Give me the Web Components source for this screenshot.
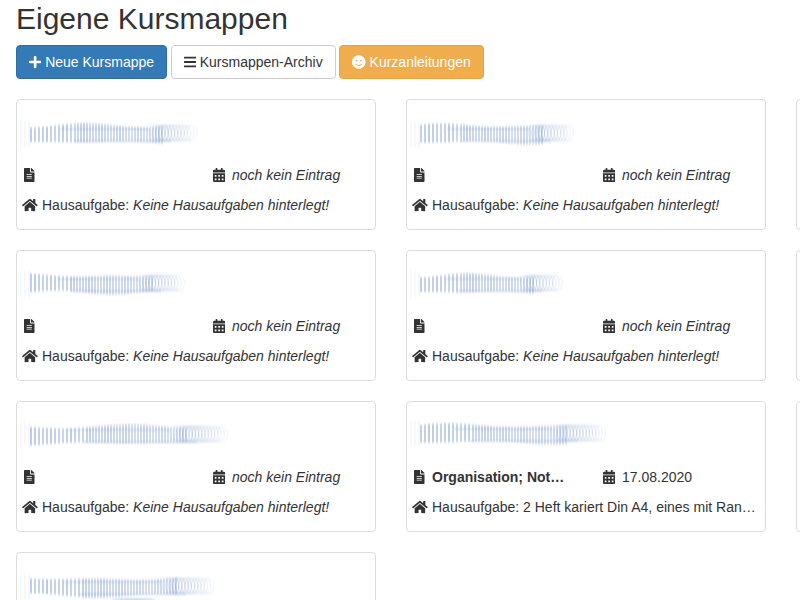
<!DOCTYPE html>
<html lang="de">
<head>
<meta charset="utf-8">
<title>Eigene Kursmappen</title>
<style>
  html, body {
    margin: 0;
    height: 600px;
    overflow: hidden;
    background: #fff;
    font: 14px/20px "Liberation Sans", Arial, sans-serif;
    color: #333;
  }
</style>
</head>
<body>
<kurs-page heading="Eigene Kursmappen">
  <kurs-button slot="actions" kind="primary" icon="plus">Neue Kursmappe</kurs-button>
  <kurs-button slot="actions" icon="bars">Kursmappen-Archiv</kurs-button>
  <kurs-button slot="actions" kind="warning" icon="smile">Kurzanleitungen</kurs-button>

  <kurs-card smear="167,1,2" date="noch kein Eintrag"><i>Keine Hausaufgaben hinterlegt!</i></kurs-card>
  <kurs-card smear="154,1,3" date="noch kein Eintrag"><i>Keine Hausaufgaben hinterlegt!</i></kurs-card>
  <kurs-card blank></kurs-card>

  <kurs-card smear="155,0,4" date="noch kein Eintrag"><i>Keine Hausaufgaben hinterlegt!</i></kurs-card>
  <kurs-card smear="144,0,2" date="noch kein Eintrag"><i>Keine Hausaufgaben hinterlegt!</i></kurs-card>
  <kurs-card blank></kurs-card>

  <kurs-card smear="197,0,1" date="noch kein Eintrag"><i>Keine Hausaufgaben hinterlegt!</i></kurs-card>
  <kurs-card smear="186,-1,3" topic="Organisation; Notizen" date="17.08.2020" filled>2 Heft kariert Din A4, eines mit Rand und eines ohne Rand</kurs-card>
  <kurs-card blank></kurs-card>

  <kurs-card blank smear="184,1,5,1"></kurs-card>
</kurs-page>

<script>
// paths are the solid icon shapes, kept here so every element can share them
const ICONS = {
  plus: [448, 'M416 208H272V64c0-17.67-14.33-32-32-32h-32c-17.67 0-32 14.33-32 32v144H32c-17.67 0-32 14.33-32 32v32c0 17.67 14.33 32 32 32h144v144c0 17.67 14.33 32 32 32h32c17.67 0 32-14.33 32-32V304h144c17.67 0 32-14.33 32-32v-32c0-17.67-14.33-32-32-32z'],
  bars: [448, 'M16 132h416c8.837 0 16-7.163 16-16V76c0-8.837-7.163-16-16-16H16C7.163 60 0 67.163 0 76v40c0 8.837 7.163 16 16 16zm0 160h416c8.837 0 16-7.163 16-16v-40c0-8.837-7.163-16-16-16H16c-8.837 0-16 7.163-16 16v40c0 8.837 7.163 16 16 16zm0 160h416c8.837 0 16-7.163 16-16v-40c0-8.837-7.163-16-16-16H16c-8.837 0-16 7.163-16 16v40c0 8.837 7.163 16 16 16z'],
  smile: [496, 'M248 8C111 8 0 119 0 256s111 248 248 248 248-111 248-248S385 8 248 8zm80 168c17.7 0 32 14.3 32 32s-14.3 32-32 32-32-14.3-32-32 14.3-32 32-32zm-160 0c17.7 0 32 14.3 32 32s-14.3 32-32 32-32-14.3-32-32 14.3-32 32-32zm194.8 170.2C334.3 380.4 292.5 400 248 400s-86.3-19.6-114.8-53.8c-13.6-16.3 11-36.7 24.6-20.5 22.4 26.9 55.2 42.2 90.2 42.2s67.8-15.4 90.2-42.2c13.4-16.2 38.1 4.2 24.6 20.5z'],
  file: [384, 'M224 136V0H24C10.7 0 0 10.7 0 24v464c0 13.3 10.7 24 24 24h336c13.3 0 24-10.7 24-24V160H248c-13.2 0-24-10.8-24-24zm64 236c0 6.6-5.4 12-12 12H108c-6.6 0-12-5.4-12-12v-8c0-6.6 5.4-12 12-12h168c6.6 0 12 5.4 12 12v8zm0-64c0 6.6-5.4 12-12 12H108c-6.6 0-12-5.4-12-12v-8c0-6.6 5.4-12 12-12h168c6.6 0 12 5.4 12 12v8zm0-72v8c0 6.6-5.4 12-12 12H108c-6.6 0-12-5.4-12-12v-8c0-6.6 5.4-12 12-12h168c6.6 0 12 5.4 12 12zm96-114.1v6.1H256V0h6.1c6.4 0 12.5 2.5 17 7l97.9 98c4.5 4.5 7 10.6 7 16.9z'],
  calendar: [448, 'M0 464c0 26.5 21.5 48 48 48h352c26.5 0 48-21.5 48-48V192H0v272zm320-196c0-6.6 5.4-12 12-12h40c6.6 0 12 5.4 12 12v40c0 6.6-5.4 12-12 12h-40c-6.6 0-12-5.4-12-12v-40zm0 128c0-6.6 5.4-12 12-12h40c6.6 0 12 5.4 12 12v40c0 6.6-5.4 12-12 12h-40c-6.6 0-12-5.4-12-12v-40zM192 268c0-6.6 5.4-12 12-12h40c6.6 0 12 5.4 12 12v40c0 6.6-5.4 12-12 12h-40c-6.6 0-12-5.4-12-12v-40zm0 128c0-6.6 5.4-12 12-12h40c6.6 0 12 5.4 12 12v40c0 6.6-5.4 12-12 12h-40c-6.6 0-12-5.4-12-12v-40zM64 268c0-6.6 5.4-12 12-12h40c6.6 0 12 5.4 12 12v40c0 6.6-5.4 12-12 12H76c-6.6 0-12-5.4-12-12v-40zm0 128c0-6.6 5.4-12 12-12h40c6.6 0 12 5.4 12 12v40c0 6.6-5.4 12-12 12H76c-6.6 0-12-5.4-12-12v-40zM400 64h-48V16c0-8.8-7.2-16-16-16h-32c-8.8 0-16 7.2-16 16v48H160V16c0-8.8-7.2-16-16-16h-32c-8.8 0-16 7.2-16 16v48H48C21.5 64 0 85.5 0 112v48h448v-48c0-26.5-21.5-48-48-48z'],
  home: [576, 'M280.37 148.26L96 300.11V464a16 16 0 0 0 16 16l112.06-.29a16 16 0 0 0 15.92-16V368a16 16 0 0 1 16-16h64a16 16 0 0 1 16 16v95.64a16 16 0 0 0 16 16.05L464 480a16 16 0 0 0 16-16V300L295.67 148.26a12.19 12.19 0 0 0-15.3 0zM571.6 251.47L488 182.56V44.05a12 12 0 0 0-12-12h-56a12 12 0 0 0-12 12v72.61L318.47 43a48 48 0 0 0-61 0L4.34 251.47a12 12 0 0 0-1.6 16.9l25.5 31A12 12 0 0 0 45.15 301l235.22-193.74a12.19 12.19 0 0 1 15.3 0L530.9 301a12 12 0 0 0 16.9-1.6l25.5-31a12 12 0 0 0-1.7-16.93z']
}

// one em is 14px, the width follows from the shape
const iconSvg = (name, gap) => {
  const [wide, d] = ICONS[name]
  const style = `flex:none;width:${wide / 512 * 14}px;height:14px;margin-right:${gap}px`
  return `<svg viewBox="0 0 ${wide} 512" style="${style}" aria-hidden="true"><path fill="currentColor" d="${d}"/></svg>`
}

customElements.define('kurs-page',
  class extends HTMLElement {
    constructor () {
      super()
      this.attachShadow({ mode: 'open' }).innerHTML = `
        <style>
          :host { display: block; padding-left: 16px; height: 600px; overflow: hidden; }
          h1 { margin: 0; padding-top: 2px; font-size: 30px; line-height: 33px; font-weight: 500; color: #333; }
          .actions { display: flex; gap: 3.5px; margin-top: 10px; }
          .grid { display: grid; grid-template-columns: repeat(3, 360px); column-gap: 30px; row-gap: 20px; margin-top: 20px; }
        </style>
        <h1></h1>
        <div class="actions"><slot name="actions"></slot></div>
        <div class="grid"><slot></slot></div>
      `
      this.shadowRoot.querySelector('h1').textContent = this.getAttribute('heading')
    }
  })

customElements.define('kurs-button',
  class extends HTMLElement {
    constructor () {
      super()
      this.attachShadow({ mode: 'open' }).innerHTML = `
        <style>
          :host {
            display: inline-flex;
            align-items: center;
            height: 34px;
            box-sizing: border-box;
            padding: 0 12px;
            border: 1px solid #ccc;
            border-radius: 4px;
            background: #fff;
            color: #333;
            white-space: nowrap;
          }
          :host([kind="primary"]) { background: #337ab7; border-color: #2e6da4; color: #fff; }
          :host([kind="warning"]) { background: #f0ad4e; border-color: #eea236; color: #fff; }
        </style>
        ${iconSvg(this.getAttribute('icon'), 3.89)}<slot></slot>
      `
    }
  })

customElements.define('kurs-smear',
  class extends HTMLElement {
    constructor () {
      super()
      this.attachShadow({ mode: 'open' })
      const [width, drift, seed, blob] = (this.getAttribute('shape') || '160,0,1').split(',').map(Number)
      const mid = 15 + drift
      const end = width + 10
      let marks = ''

      // faint ghost strokes left of the title
      for (let x = 0; x < 10; x += 4) {
        marks += `<path d="M${x} ${mid - 13}v26" stroke="#c8cfe0" stroke-width="1.2" stroke-opacity="0.25"/>`
      }

      // thin uprights, wide apart at the start and closing up towards the end
      const tailStart = end * 0.8
      let x = 10
      while (x < tailStart) {
        const t = x / end
        const wave = Math.sin(t * 7 + seed) * 1.2
        const half = 8.5 + Math.sin(t * 11 + seed * 2) * 1.2
        const alpha = 0.78 - 0.32 * t - 0.12 * Math.abs(Math.sin(x * 0.17 + seed))
        marks += `<path d="M${x.toFixed(1)} ${(mid + wave - half).toFixed(1)}v${(half * 2).toFixed(1)}" stroke="#7293c6" stroke-width="1.3" stroke-opacity="${alpha.toFixed(2)}"/>`
        x += t < 0.3 ? 4 : 3
      }

      // round loops where the smear runs out, fading in and then out again
      for (let o = tailStart - 12; o < end - 5; o += 3.2) {
        const p = (o - tailStart + 12) / (end - tailStart + 12)
        const fade = 0.34 * Math.min(p * 4, 1) * (1 - p) + 0.05
        marks += `<ellipse cx="${o.toFixed(1)}" cy="${mid - 1}" rx="5" ry="8" fill="none" stroke="#7293c6" stroke-width="1.1" stroke-opacity="${fade.toFixed(2)}"/>`
      }

      // the darker bands along the top and the bottom of the letters
      marks += `<path d="M${end * 0.22} ${mid - 5}H${end * 0.72}" stroke="#5f8bc4" stroke-width="1.2" stroke-opacity="0.35"/>`
      marks += `<path d="M${end * 0.3} ${mid + 7}H${end * 0.85}" stroke="#7d9ccb" stroke-width="2" stroke-opacity="0.25"/>`
      if (blob) {
        marks += `<ellipse cx="${end * 0.58}" cy="29" rx="22" ry="2" fill="#9db4d8" fill-opacity="0.5"/>`
      }

      this.shadowRoot.innerHTML = `
        <style>
          :host { display: block; height: 30px; }
          svg { display: block; overflow: visible; }
        </style>
        <svg width="${end + 10}" height="30" aria-hidden="true">
          <filter id="soft" x="-5%" y="-30%" width="110%" height="160%"><feGaussianBlur stdDeviation="0.45 0.8"/></filter>
          <g filter="url(#soft)">${marks}</g>
        </svg>
      `
    }
  })

customElements.define('kurs-card',
  class extends HTMLElement {
    constructor () {
      super()
      const smear = this.getAttribute('smear')
      const body = this.hasAttribute('blank')
        ? ''
        : `<div class="meta">
            <div class="cell file">${iconSvg('file', 7.5)}<span class="topic">${this.getAttribute('topic') || ''}</span></div>
            <div class="cell">${iconSvg('calendar', 6.75)}<span class="date">${this.getAttribute('date')}</span></div>
          </div>
          <div class="work">${iconSvg('home', 4.25)}<span class="text">Hausaufgabe: <slot></slot></span></div>`
      this.attachShadow({ mode: 'open' }).innerHTML = `
        <style>
          :host {
            display: block;
            box-sizing: border-box;
            width: 360px;
            height: 131px;
            border: 1px solid #ddd;
            border-radius: 4px;
            background: #fff;
            overflow: hidden;
          }
          kurs-smear { margin: 18px 0 0 4px; }
          .meta { display: grid; grid-template-columns: 190px 1fr; margin: 17px 0 0 6px; height: 20px; }
          .cell { display: flex; align-items: center; min-width: 0; }
          .file { padding-left: 1px; }
          .topic { font-weight: 700; width: 134px; overflow: hidden; white-space: nowrap; text-overflow: ellipsis; }
          :host(:not([filled])) .date { font-style: italic; }
          .work { display: flex; align-items: center; margin: 10px 0 0 5px; height: 20px; }
          .text { width: 325px; overflow: hidden; white-space: nowrap; text-overflow: ellipsis; }
        </style>
        ${smear ? `<kurs-smear shape="${smear}"></kurs-smear>` : ''}
        ${body}
      `
    }
  })
</script>
</body>
</html>
